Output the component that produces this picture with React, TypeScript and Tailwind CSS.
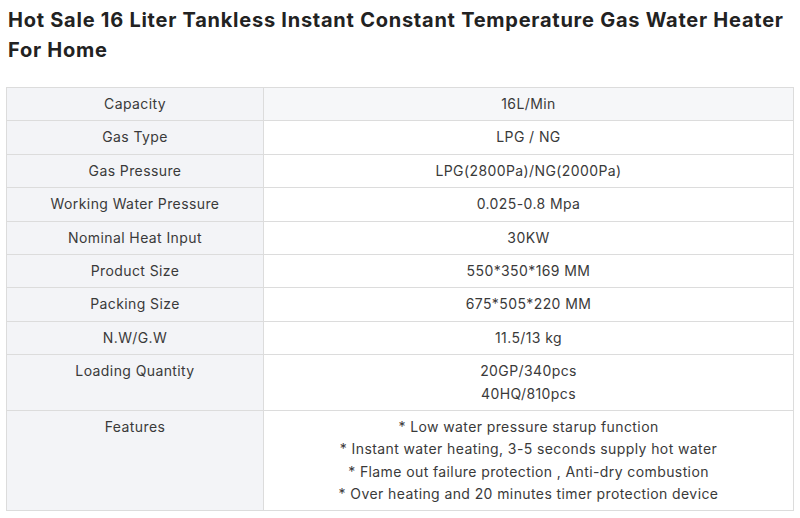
const ROWS: [string, string[]][] = [
  ['Capacity', ['16L/Min']],
  ['Gas Type', ['LPG / NG']],
  ['Gas Pressure', ['LPG(2800Pa)/NG(2000Pa)']],
  ['Working Water Pressure', ['0.025-0.8 Mpa']],
  ['Nominal Heat Input', ['30KW']],
  ['Product Size', ['550*350*169 MM']],
  ['Packing Size', ['675*505*220 MM']],
  ['N.W/G.W', ['11.5/13 kg']],
  ['Loading Quantity', ['20GP/340pcs', '40HQ/810pcs']],
  [
    'Features',
    [
      '* Low water pressure starup function',
      '* Instant water heating, 3-5 seconds supply hot water',
      '* Flame out failure protection , Anti-dry combustion',
      '* Over heating and 20 minutes timer protection device',
    ],
  ],
]

export default function App() {
  return (
    <div className="min-h-screen bg-white px-[6px] pt-[5px] font-['Inter','Liberation_Sans',sans-serif]">
      <h1 className="pl-[2px] text-[20px] font-bold leading-[30px] tracking-[0.75px] text-[#222]">
        Hot Sale 16 Liter Tankless Instant Constant Temperature Gas Water Heater For Home
      </h1>

      <table className="mt-[22px] w-[788px] border-collapse text-[14px] leading-[1.6] tracking-[0.4px] text-[#3a3a3a]">
        <tbody>
          {ROWS.map(([label, values], i) => (
            <tr key={label}>
              <td className="w-[257px] border border-[#dcdcdc] bg-[#f3f4f7] px-2 py-[5px] text-center align-top">
                {label}
              </td>
              <td
                className={`border border-[#dcdcdc] px-2 py-[5px] text-center align-top ${
                  i === 0 ? 'bg-[#f6f7f9]' : 'bg-white'
                }`}
              >
                {values.map(v => (
                  <div key={v}>{v}</div>
                ))}
              </td>
            </tr>
          ))}
        </tbody>
      </table>
    </div>
  )
}
